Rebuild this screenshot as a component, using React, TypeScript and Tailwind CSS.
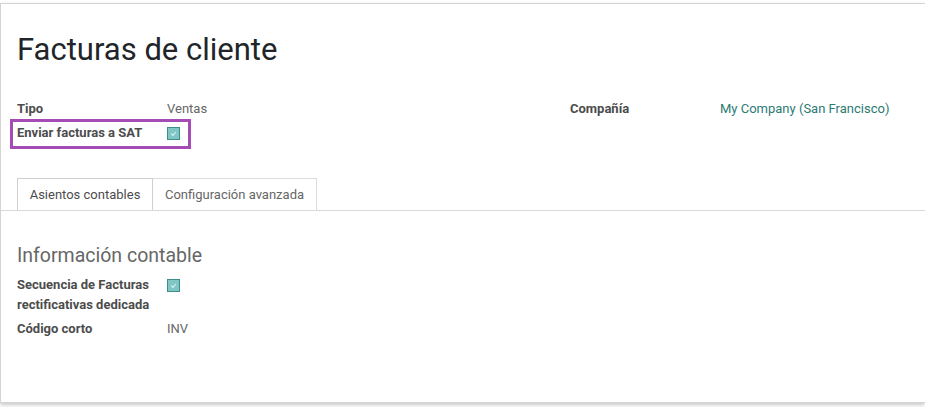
export default function App() {
  const Check = () => (
    <span className="inline-flex w-[13px] h-[13px] items-center justify-center bg-[#7fc6c4] border border-[#3f8d8a]">
      <svg width="9" height="9" viewBox="0 0 10 10">
        <path d="M2.5 5.2 L4.3 7 L7.6 3.4" fill="none" stroke="#d9f0ef" strokeWidth="1.3" />
      </svg>
    </span>
  );

  return (
    <div className="w-[925px] h-[407px] bg-white pt-[3px] font-['Roboto',sans-serif] text-[13px] overflow-hidden">
      <div className="h-[400px] bg-white border-t border-l border-b border-[#d4d4d4] shadow-[0_2px_4px_rgba(0,0,0,0.22)]">
        <div className="pl-4 pt-[27px]">
          <h1 className="text-[31px] leading-[38px] text-[#212529] font-normal">Facturas de cliente</h1>

          <div className="flex mt-[30px]">
            <div className="w-[553px]">
              <div className="flex h-[20px] items-center mb-1">
                <div className="w-[150px] font-bold text-[#4c4c4c]">Tipo</div>
                <div className="text-[#666666]">Ventas</div>
              </div>
              <div className="relative flex h-[20px] items-center">
                <div className="w-[150px] font-bold text-[#4c4c4c]">Enviar facturas a SAT</div>
                <Check />
                <div className="absolute -left-[7px] -top-[4px] w-[181px] h-[30px] border-[3px] border-[#a44bb6]" />
              </div>
            </div>
            <div className="flex h-[20px] items-center">
              <div className="w-[150px] font-bold text-[#4c4c4c]">Compañía</div>
              <div className="text-[#2c7a74]">My Company (San Francisco)</div>
            </div>
          </div>
        </div>

        <div className="mt-[35px] pl-4 border-b border-[#d9d9d9] flex">
          <div className="w-[136px] h-[32px] -mb-px bg-white border border-b-0 border-[#cfcfcf] flex items-center justify-center text-[#4c4c4c]">
            Asientos contables
          </div>
          <div className="w-[164px] h-[32px] border-t border-r border-[#dcdcdc] flex items-center justify-center text-[#666666]">
            Configuración avanzada
          </div>
        </div>

        <div className="pl-4 pt-[33px]">
          <h2 className="text-[19.5px] leading-[24px] text-[#666666] font-normal mb-[7px]">Información contable</h2>
          <div className="flex mb-1">
            <div className="w-[150px] font-bold text-[#4c4c4c] leading-[20px]">
              Secuencia de Facturas
              <br />
              rectificativas dedicada
            </div>
            <div className="h-[20px] flex items-center">
              <Check />
            </div>
          </div>
          <div className="flex h-[20px] items-center">
            <div className="w-[150px] font-bold text-[#4c4c4c]">Código corto</div>
            <div className="text-[#666666]">INV</div>
          </div>
        </div>
      </div>
    </div>
  );
}
